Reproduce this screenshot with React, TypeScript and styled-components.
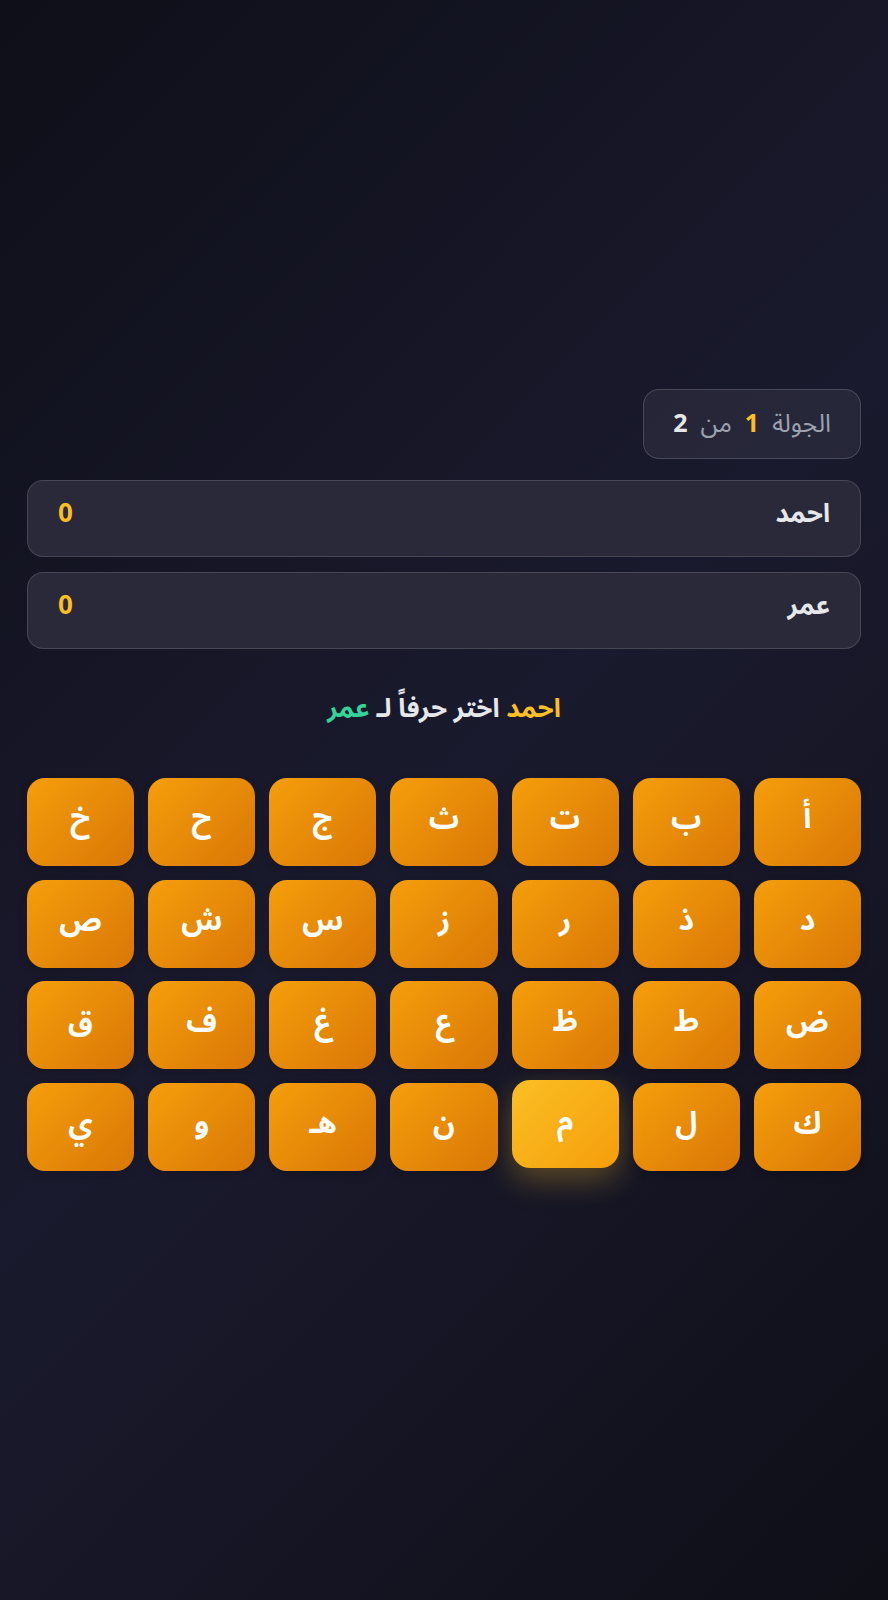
import React from "react";
import styled, {createGlobalStyle} from "styled-components";

const GlobalStyle = createGlobalStyle`
  * {
    box-sizing: border-box;
  }
  body {
    margin: 0;
    font-family: "Noto Sans Arabic", "Noto Sans", "DejaVu Sans", sans-serif;
    background: #12121c;
  }
`

const Page = styled.div`
  min-height: 1600px;
  padding: 0 27px 40px;
  display: flex;
  flex-direction: column;
  justify-content: center;
  background: linear-gradient(135deg, #0e0f18 0%, #1a1a2e 50%, #0f0f18 100%);
  direction: rtl;
`

const Badge = styled.div`
  align-self: flex-start;
  height: 70px;
  padding: 0 29px;
  display: flex;
  align-items: center;
  gap: 13px;
  border-radius: 16px;
  background: rgba(255, 255, 255, 0.06);
  border: 1px solid rgba(255, 255, 255, 0.16);
  font-size: 25px;
  color: #9ca3af;
`

const Num = styled.b<{ $accent?: boolean }>`
  font-weight: 700;
  color: ${p => p.$accent ? "#fbbf24" : "#e5e7eb"};
`

const Players = styled.div`
  margin-top: 21px;
  display: flex;
  flex-direction: column;
  gap: 15px;
`

const PlayerCard = styled.div`
  height: 77px;
  padding: 16px 30px 0;
  display: flex;
  justify-content: space-between;
  align-items: flex-start;
  border-radius: 16px;
  background: #292939;
  border: 1px solid rgba(255, 255, 255, 0.14);
  font-size: 26px;
  font-weight: 700;
  line-height: 34px;
`

const Name = styled.span`
  color: #e5e7eb;
`

const Score = styled.span`
  color: #fbbf24;
`

const Prompt = styled.div`
  margin-top: 42px;
  text-align: center;
  font-size: 26px;
  font-weight: 700;
  color: #e5e7eb;
  line-height: 36px;
`

const Tone = styled.span<{ $color: string }>`
  color: ${p => p.$color};
`

const Grid = styled.div`
  margin-top: 51px;
  display: grid;
  grid-template-columns: repeat(7, 1fr);
  column-gap: 14px;
  row-gap: 13.5px;
`

const Tile = styled.button<{ $active?: boolean }>`
  height: 88px;
  border: none;
  border-radius: 18px;
  display: flex;
  align-items: center;
  justify-content: center;
  font-family: inherit;
  font-size: 30px;
  font-weight: 700;
  color: #ffffff;
  cursor: pointer;
  background: ${p => p.$active
          ? "linear-gradient(135deg, #fbbf24, #f59e0b)"
          : "linear-gradient(135deg, #f59e0b, #d97706)"};
  box-shadow: ${p => p.$active
          ? "0 12px 30px rgba(251, 191, 36, 0.3)"
          : "0 4px 10px rgba(0, 0, 0, 0.15)"};
  transform: ${p => p.$active ? "translateY(-3px)" : "none"};
  padding-bottom: 8px;
`

const letters = [
    "أ", "ب", "ت", "ث", "ج", "ح", "خ",
    "د", "ذ", "ر", "ز", "س", "ش", "ص",
    "ض", "ط", "ظ", "ع", "غ", "ف", "ق",
    "ك", "ل", "م", "ن", "هـ", "و", "ي",
]

const players = [
    {id: 1, name: "احمد", score: 0},
    {id: 2, name: "عمر", score: 0},
]

export default function App() {
    return (
        <>
            <GlobalStyle/>
            <Page dir="rtl">
                <Badge>
                    <span>الجولة</span>
                    <Num $accent>1</Num>
                    <span>من</span>
                    <Num>2</Num>
                </Badge>
                <Players>
                    {players.map(p => (
                        <PlayerCard key={p.id}>
                            <Name>{p.name}</Name>
                            <Score>{p.score}</Score>
                        </PlayerCard>
                    ))}
                </Players>
                <Prompt>
                    <Tone $color="#fbbf24">احمد</Tone> اختر حرفاً لـ <Tone $color="#34d399">عمر</Tone>
                </Prompt>
                <Grid>
                    {letters.map(l => (
                        <Tile key={l} $active={l === "م"}>{l}</Tile>
                    ))}
                </Grid>
            </Page>
        </>
    )
}
